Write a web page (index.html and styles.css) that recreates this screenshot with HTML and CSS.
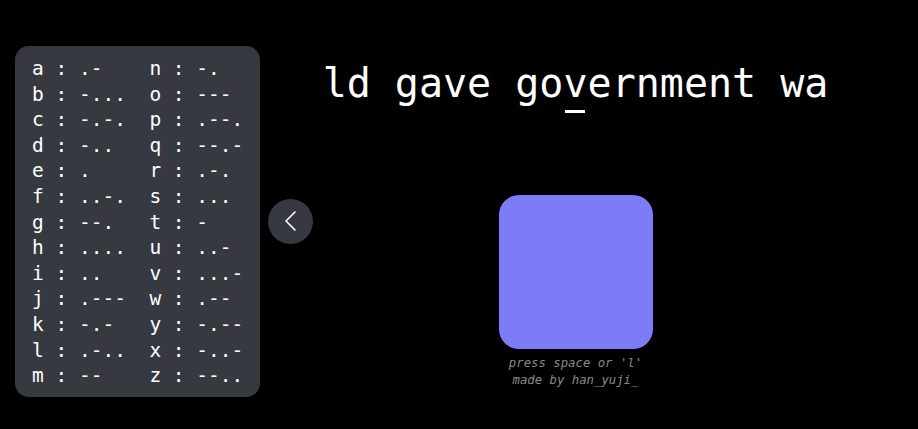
FILE: index.html
```html
<!DOCTYPE html>
<html lang="en">
<head>
<meta charset="utf-8">
<title>morse typing</title>
<link rel="stylesheet" href="styles.css">
</head>
<body>
<div class="app">
  <aside class="sidebar">
    <div class="chart">
      <div class="row"><span>a : .-</span><span>n : -.</span></div>
      <div class="row"><span>b : -...</span><span>o : ---</span></div>
      <div class="row"><span>c : -.-.</span><span>p : .--.</span></div>
      <div class="row"><span>d : -..</span><span>q : --.-</span></div>
      <div class="row"><span>e : .</span><span>r : .-.</span></div>
      <div class="row"><span>f : ..-.</span><span>s : ...</span></div>
      <div class="row"><span>g : --.</span><span>t : -</span></div>
      <div class="row"><span>h : ....</span><span>u : ..-</span></div>
      <div class="row"><span>i : ..</span><span>v : ...-</span></div>
      <div class="row"><span>j : .---</span><span>w : .--</span></div>
      <div class="row"><span>k : -.-</span><span>y : -.--</span></div>
      <div class="row"><span>l : .-..</span><span>x : -..-</span></div>
      <div class="row"><span>m : --</span><span>z : --..</span></div>
    </div>
    <button class="toggle" aria-label="collapse">
      <svg width="45" height="45" viewBox="0 0 45 45"><polyline points="27,13 18,22 27,31" fill="none" stroke="#ffffff" stroke-width="1.6" stroke-linecap="round" stroke-linejoin="round"/></svg>
    </button>
  </aside>
  <main class="main">
    <div class="typed">ld gave go<span class="cursor">v</span>ernment wa</div>
    <div class="key"></div>
    <div class="hint">
      <div>press space or 'l'</div>
      <div>made by han_yuji_</div>
    </div>
  </main>
</div>
</body>
</html>
```
FILE: styles.css
```css
html, body {
  margin: 0;
  padding: 0;
  background: #000000;
  color: #ffffff;
  font-family: "DejaVu Sans Mono", "Liberation Mono", monospace;
}

.app {
  display: flex;
  align-items: flex-start;
  width: 918px;
  height: 429px;
  padding-left: 15px;
  box-sizing: border-box;
  overflow: hidden;
}

.sidebar {
  display: flex;
  align-items: center;
  gap: 8px;
  margin-top: 46px;
}

.chart {
  width: 245px;
  box-sizing: border-box;
  background: #36393f;
  border-radius: 14px;
  padding: 10px 0 8px 17px;
  font-size: 19.5px;
  line-height: 25.6px;
  color: #ffffff;
}

.row {
  display: grid;
  grid-template-columns: 10ch auto;
  white-space: pre;
}

.toggle {
  width: 45px;
  height: 45px;
  border-radius: 50%;
  border: 0;
  padding: 0;
  background: #36393f;
  display: flex;
  align-items: center;
  justify-content: center;
}

.toggle svg {
  display: block;
}

.main {
  flex: 1;
  display: flex;
  flex-direction: column;
  align-items: center;
  padding-top: 59px;
  padding-right: 80px;
}

.typed {
  font-size: 40px;
  line-height: 48px;
  white-space: pre;
  color: #ffffff;
}

.cursor {
  position: relative;
}

.cursor::after {
  content: "";
  position: absolute;
  left: 2px;
  width: 20px;
  top: 50px;
  height: 3px;
  background: #ffffff;
}

.key {
  width: 154px;
  height: 154px;
  margin-top: 88px;
  border-radius: 20px;
  background: #7c7cf7;
}

.hint {
  margin-top: 6px;
  font-size: 12.3px;
  line-height: 17px;
  font-style: italic;
  color: #8a8a8a;
  text-align: center;
  white-space: nowrap;
}
```
